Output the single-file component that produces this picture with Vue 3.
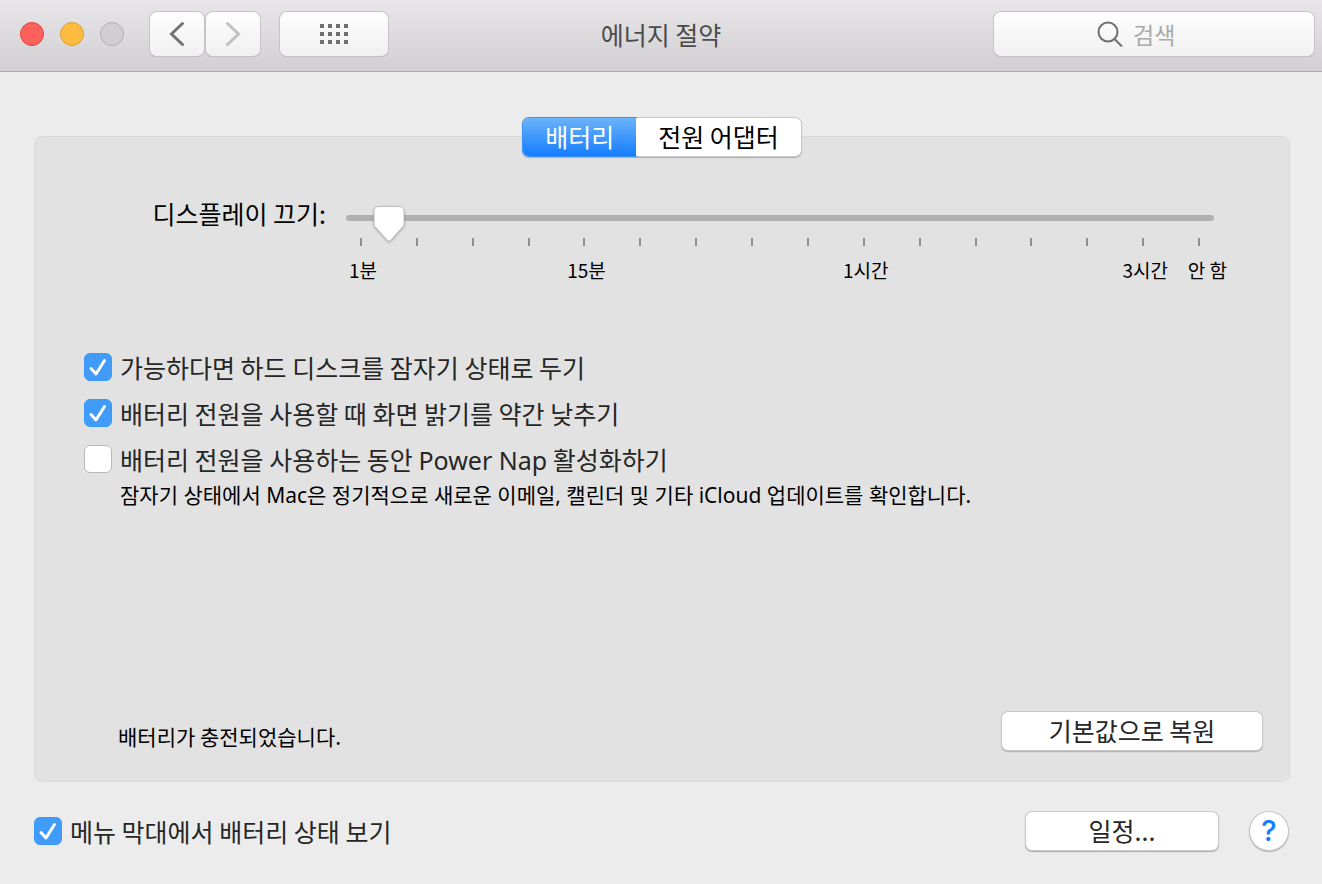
<template>
  <div class="window">
    <header class="toolbar">
      <div class="toolbar-left">
        <div class="lights">
          <button class="light close" aria-label="닫기"></button>
          <button class="light minimize" aria-label="최소화"></button>
          <button class="light zoom" aria-label="확대" disabled></button>
        </div>
        <div class="nav">
          <button class="tool-btn nav-btn" aria-label="뒤로">
            <svg width="16" height="26" viewBox="0 0 16 26">
              <path d="M13.5 2.5 L2.5 13 L13.5 23.5" fill="none" stroke="#737373" stroke-width="3" stroke-linecap="round" stroke-linejoin="miter" />
            </svg>
          </button>
          <button class="tool-btn nav-btn" aria-label="앞으로" disabled>
            <svg width="16" height="26" viewBox="0 0 16 26">
              <path d="M2.5 2.5 L13.5 13 L2.5 23.5" fill="none" stroke="#c1c1c1" stroke-width="3" stroke-linecap="round" stroke-linejoin="miter" />
            </svg>
          </button>
        </div>
        <button class="tool-btn all-btn" aria-label="모두 보기">
          <svg width="28" height="20" viewBox="0 0 28 20" fill="#6f6f6f">
            <template v-for="row in 3" :key="row">
              <rect v-for="col in 4" :key="col" :x="(col - 1) * 8" :y="(row - 1) * 8" width="4" height="4" />
            </template>
          </svg>
        </button>
      </div>
      <h1 class="title">에너지 절약</h1>
      <div class="toolbar-right">
        <label class="search">
          <svg width="26" height="26" viewBox="0 0 26 26" fill="none" stroke="#6f6f6f" stroke-width="2">
            <circle cx="11" cy="11" r="9.500" />
            <path d="M17.500 18 L25 25.500" />
          </svg>
          <input v-model="query" type="text" placeholder="검색" aria-label="검색" />
        </label>
      </div>
    </header>

    <main class="content">
      <section class="panel">
        <div class="tabs" role="tablist">
          <button
            v-for="tab in tabs"
            :key="tab"
            class="tab"
            :class="{ active: tab === activeTab }"
            role="tab"
            :aria-selected="tab === activeTab"
            @click="activeTab = tab"
          >{{ tab }}</button>
        </div>

        <div class="slider-row">
          <label class="slider-label" for="display-off">디스플레이 끄기:</label>
          <div class="slider">
            <div class="slider-control">
              <input id="display-off" v-model.number="displayOff" type="range" min="0" max="15" step="0.5" />
              <div class="rail">
                <svg class="thumb" :style="{ left: thumbLeft }" width="36" height="40" viewBox="0 0 36 40">
                  <path d="M8 2.5 H28 Q33 2.5 33 7.5 V20 Q33 21.500 32 22.500 L19.500 36.500 Q18 38 16.500 36.500 L4 22.500 Q3 21.500 3 20 V7.500 Q3 2.500 8 2.500 Z" fill="#fff" stroke="#bdbdbd" stroke-width="1" />
                </svg>
              </div>
            </div>
            <!-- one column per tick, text only under some of them -->
            <div class="ticks">
              <div v-for="n in 16" :key="n" class="tick">
                <span class="mark"></span>
                <span class="tick-label">{{ tickLabels[n - 1] }}</span>
              </div>
            </div>
          </div>
        </div>

        <div class="options">
          <label v-for="option in options" :key="option.id" class="check">
            <span class="box">
              <input v-model="option.checked" type="checkbox" />
              <svg v-if="option.checked" width="28" height="28" viewBox="0 0 28 28">
                <path d="M7 15.500 L12 21 L20.500 7.500" fill="none" stroke="#fff" stroke-width="3" stroke-linecap="round" stroke-linejoin="round" />
              </svg>
            </span>
            <span>{{ option.before }}<span v-if="option.latin" class="latin">{{ option.latin }}</span>{{ option.after }}</span>
          </label>
          <p class="note">잠자기 상태에서 Mac은 정기적으로 새로운 이메일, 캘린더 및 기타 iCloud 업데이트를 확인합니다.</p>
        </div>

        <div class="panel-bottom">
          <p class="status">배터리가 충전되었습니다.</p>
          <button class="push restore">기본값으로 복원</button>
        </div>
      </section>

      <footer class="footer">
        <label class="check">
          <span class="box">
            <input v-model="showInMenu" type="checkbox" />
            <svg v-if="showInMenu" width="28" height="28" viewBox="0 0 28 28">
              <path d="M7 15.500 L12 21 L20.500 7.500" fill="none" stroke="#fff" stroke-width="3" stroke-linecap="round" stroke-linejoin="round" />
            </svg>
          </span>
          <span>메뉴 막대에서 배터리 상태 보기</span>
        </label>
        <div class="footer-actions">
          <button class="push schedule">일정...</button>
          <button class="help" aria-label="도움말">?</button>
        </div>
      </footer>
    </main>
  </div>
</template>

<script setup>
import { computed, reactive, ref } from 'vue'

const query = ref('')
const tabs = ['배터리', '전원 어댑터']
const activeTab = ref('배터리')

const displayOff = ref(0.5)
const thumbLeft = computed(() => (displayOff.value / 15) * 100 + '%')
const tickLabels = { 0: '1분', 4: '15분', 9: '1시간', 14: '3시간', 15: '안 함' }

const options = reactive([
  { id: 'disk', before: '가능하다면 하드 디스크를 잠자기 상태로 두기', checked: true },
  { id: 'dim', before: '배터리 전원을 사용할 때 화면 밝기를 약간 낮추기', checked: true },
  { id: 'nap', before: '배터리 전원을 사용하는 동안 ', latin: 'Power Nap', after: ' 활성화하기', checked: false }
])
const showInMenu = ref(true)
</script>

<style>
body {
  margin: 0;
  background: #ececec;
}
</style>

<style scoped>
.window {
  display: flex;
  flex-direction: column;
  min-height: 100vh;
  background: #ececec;
  color: #000;
  font-family: "Noto Sans CJK KR", sans-serif;
  font-size: 25px;
  line-height: 36px;
}
.window * {
  box-sizing: border-box;
}
button, input {
  font: inherit;
  margin: 0;
  padding: 0;
  border: none;
}
p {
  margin: 0;
}
.latin {
  font-family: "Noto Sans", sans-serif;
  line-height: 1;
}

/* toolbar */
.toolbar {
  display: flex;
  align-items: center;
  height: 72px;
  padding: 0 8px 3px;
  background: linear-gradient(#e8e6e9, #d1cfd2);
  border-bottom: 1px solid #a9a9a9;
}
.toolbar-left, .toolbar-right {
  display: flex;
  flex: 1;
  align-items: center;
}
.toolbar-right {
  justify-content: flex-end;
}
.lights {
  display: flex;
  gap: 16px;
  margin: 0 26px 0 12px;
}
.light {
  width: 24px;
  height: 24px;
  border-radius: 50%;
}
.close {
  background: #fc615d;
  border: 1px solid #e2443f;
}
.minimize {
  background: #fdbc40;
  border: 1px solid #dd9d33;
}
.zoom {
  background: #cfcfcf;
  border: 1px solid #b0b0b0;
}
.nav {
  display: flex;
  gap: 2px;
  margin-right: 20px;
}
.tool-btn, .search {
  display: flex;
  align-items: center;
  justify-content: center;
  height: 44px;
  border-radius: 7px;
  background: linear-gradient(#fefefe, #f0f0f0);
  box-shadow: 0 0 0 1px #c6c4c7, 0 1px 1px 0 #a5a3a6;
}
.nav-btn {
  width: 54px;
}
.all-btn {
  width: 108px;
}
.title {
  margin: 0;
  font-size: 25px;
  font-weight: 400;
  color: #4b4b4b;
}
.search {
  gap: 10px;
  width: 320px;
}
.search input {
  width: 78px;
  background: transparent;
  outline: none;
  font-size: 23px;
}
.search input::placeholder {
  color: #a9a9a9;
  opacity: 1;
}

/* panel */
.content {
  display: flex;
  flex: 1;
  flex-direction: column;
  padding: 64px 32px 34px 34px;
}
.panel {
  display: flex;
  flex: 1;
  flex-direction: column;
  border: 1px solid #dadada;
  border-radius: 8px;
  background: #e2e2e2;
}
.tabs {
  display: flex;
  align-self: center;
  margin-top: -19px;
  border-radius: 6px;
  box-shadow: 0 0 0 1px #c8c8c8, 0 1px 1px 1px #b0b0b0;
}
.tab {
  height: 38px;
  padding: 0 22px 4px;
  background: #fff;
  color: #000;
}
.tab:first-child {
  border-radius: 6px 0 0 6px;
}
.tab:last-child {
  border-radius: 0 6px 6px 0;
}
.tab.active {
  background: linear-gradient(#6bb3fa, #147dff);
  box-shadow: 0 0 0 1px #3f94f8;
  color: #fff;
}
.slider-row {
  display: flex;
  gap: 20px;
  margin-top: 41px;
  padding-right: 75px;
}
.slider-label {
  width: 291px;
  line-height: 32px;
  text-align: right;
}
.slider {
  flex: 1;
}
.slider-control {
  position: relative;
  height: 41px;
}
.slider-control input {
  display: block;
  width: 100%;
  height: 41px;
  appearance: none;
  background: transparent;
  outline: none;
}
.slider-control input::-webkit-slider-runnable-track {
  height: 6px;
  border-radius: 3px;
  background: #b0b0b0;
}
.slider-control input::-webkit-slider-thumb {
  appearance: none;
  width: 30px;
  height: 34px;
  margin-top: -8px;
  opacity: 0;
}
.rail {
  position: absolute;
  top: 7px;
  left: 15px;
  right: 15px;
  pointer-events: none;
}
.thumb {
  position: absolute;
  margin-left: -18px;
  filter: drop-shadow(0 1px 1px rgba(0, 0, 0, 0.25));
}
.ticks {
  display: grid;
  grid-template-columns: repeat(16, minmax(0, 1fr));
  margin: 0 -13px;
}
.tick {
  display: flex;
  flex-direction: column;
  align-items: center;
}
.mark {
  width: 2px;
  height: 8px;
  background: #8f8f8f;
}
.tick-label {
  height: 28px;
  margin-top: 10px;
  padding-left: 4px;
  font-size: 19px;
  line-height: 28px;
  white-space: nowrap;
}
.tick:last-child .tick-label {
  align-self: flex-end;
}
.options {
  display: flex;
  flex-direction: column;
  align-items: flex-start;
  gap: 10px;
  margin-top: 65px;
  padding-left: 49px;
}
.check {
  display: flex;
  align-items: center;
  gap: 8px;
  color: #262626;
}
.box {
  position: relative;
  width: 28px;
  height: 28px;
}
.box input {
  display: block;
  width: 28px;
  height: 28px;
  appearance: none;
  border: 1px solid #b8b8b8;
  border-radius: 6px;
  background: #fff;
}
.box input:checked {
  border-color: #3b99fc;
  background: #419bf9;
}
.box svg {
  position: absolute;
  top: 0;
  left: 0;
  pointer-events: none;
}
.note {
  margin-top: -6px;
  padding-left: 36px;
  font-family: "Noto Sans", "Noto Sans CJK KR", sans-serif;
  font-size: 21px;
  line-height: 28px;
}
.panel-bottom {
  display: flex;
  align-items: flex-end;
  justify-content: space-between;
  margin-top: auto;
  padding: 0 27px 31px 83px;
}
.status {
  font-size: 21px;
  line-height: 28px;
}
.push {
  height: 38px;
  padding-bottom: 4px;
  border-radius: 6px;
  background: #fff;
  color: #262626;
  box-shadow: 0 0 0 1px #c8c8c8, 0 1px 1px 1px #b0b0b0;
}
.restore {
  width: 260px;
}

/* footer */
.footer {
  display: flex;
  align-items: center;
  justify-content: space-between;
  padding-top: 30px;
}
.footer-actions {
  display: flex;
  align-items: center;
  gap: 32px;
  padding-right: 2px;
}
.schedule {
  width: 192px;
}
.help {
  width: 38px;
  height: 38px;
  border-radius: 50%;
  background: #fff;
  color: #147dff;
  font-family: Inter, sans-serif;
  font-size: 29px;
  font-weight: 500;
  box-shadow: 0 0 0 1px #c8c8c8, 0 1px 1px 1px #b0b0b0;
}
</style>
